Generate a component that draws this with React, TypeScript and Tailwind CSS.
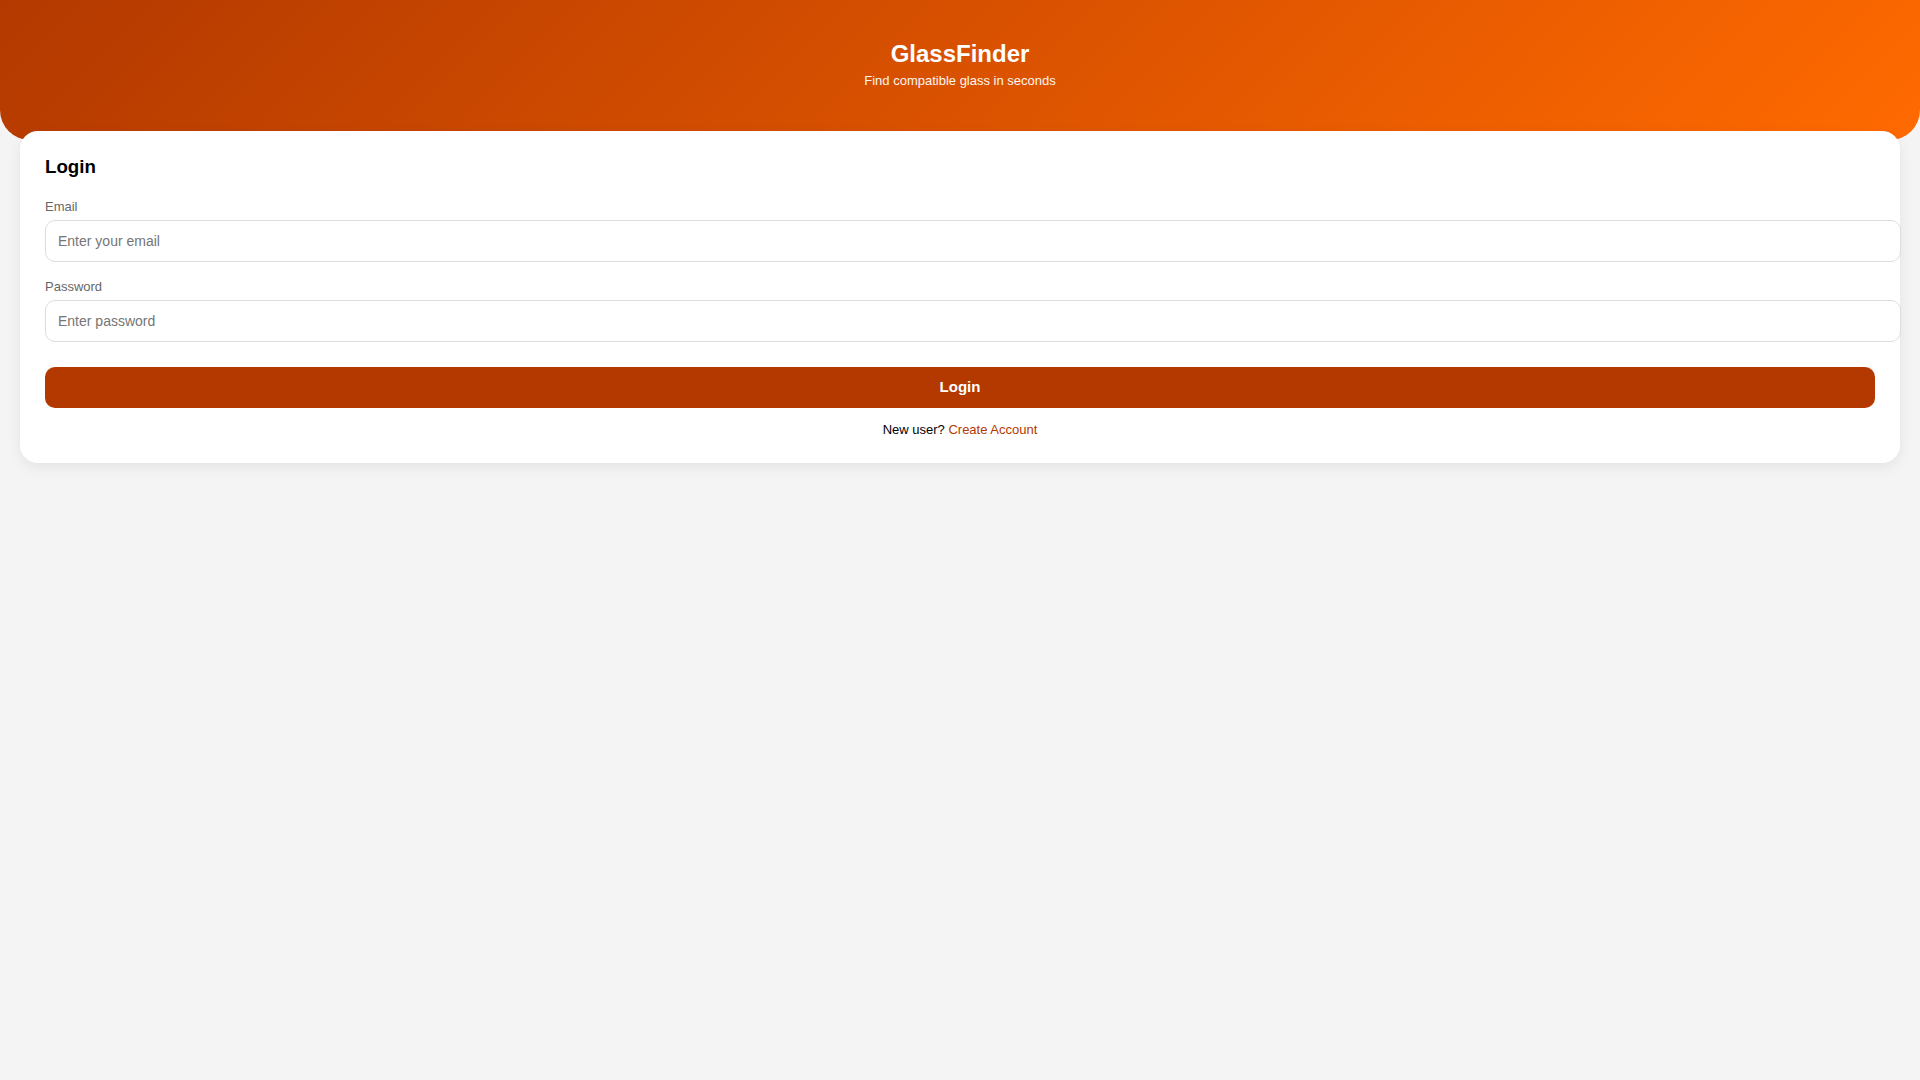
export default function App() {
  return (
    <div className="min-h-screen bg-[#f4f4f4] font-['Liberation_Sans',Arial,sans-serif]">
      {/* header */}
      <header className="bg-[linear-gradient(135deg,#b33900,#ff6a00)] text-white text-center rounded-b-[30px] pt-[40px] pb-[52px]">
        <h1 className="text-[24px] leading-[28px] font-bold">GlassFinder</h1>
        <p className="text-[13px] leading-[15px] mt-[5px] opacity-95">
          Find compatible glass in seconds
        </p>
      </header>

      {/* login card */}
      <div className="mx-[20px] -mt-[9px] bg-white rounded-[18px] px-[25px] pt-[25px] pb-[26px] shadow-[0_4px_14px_rgba(0,0,0,0.07)]">
        <h2 className="text-[18.72px] leading-[22px] font-bold text-black">Login</h2>

        <div className="mt-[21px] flex flex-col">
          <label className="text-[13px] leading-[15px] text-[#666] mb-[6px]">Email</label>
          <input
            type="email"
            placeholder="Enter your email"
            className="box-content w-full px-3 py-3 text-[14px] leading-[16px] border border-[#ddd] rounded-[10px] outline-none placeholder:text-[#757575]"
          />
        </div>

        <div className="mt-[17px] flex flex-col">
          <label className="text-[13px] leading-[15px] text-[#666] mb-[6px]">Password</label>
          <input
            type="password"
            placeholder="Enter password"
            className="box-content w-full px-3 py-3 text-[14px] leading-[16px] border border-[#ddd] rounded-[10px] outline-none placeholder:text-[#757575]"
          />
        </div>

        <button className="mt-[25px] w-full h-[41px] rounded-[10px] bg-[#b33900] text-white text-[15px] font-bold">
          Login
        </button>

        <p className="mt-[14px] text-center text-[13px] leading-[15px] text-black">
          New user? <a href="#" className="text-[#b33900]">Create Account</a>
        </p>
      </div>
    </div>
  );
}
